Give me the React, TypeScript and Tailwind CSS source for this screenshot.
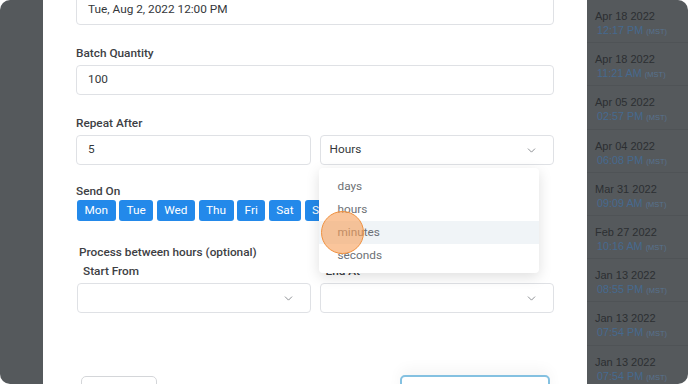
import { ChevronDown } from "lucide-react";

const days = ["Mon", "Tue", "Wed", "Thu", "Fri", "Sat", "Sun"];
const units = ["days", "hours", "minutes", "seconds"];

const rows = [
  { date: "Apr 18 2022", time: "12:17 PM" },
  { date: "Apr 18 2022", time: "11:21 AM" },
  { date: "Apr 05 2022", time: "02:57 PM" },
  { date: "Apr 04 2022", time: "06:08 PM" },
  { date: "Mar 31 2022", time: "09:09 AM" },
  { date: "Feb 27 2022", time: "10:16 AM" },
  { date: "Jan 13 2022", time: "08:55 PM" },
  { date: "Jan 13 2022", time: "07:54 PM" },
  { date: "Jan 13 2022", time: "07:54 PM" },
];

function Label({ children, className = "" }: { children: React.ReactNode; className?: string }) {
  return <div className={`text-[11.8px] leading-[16px] font-medium text-[#3d4044] ${className}`}>{children}</div>;
}

function Input({ value, className = "" }: { value: string; className?: string }) {
  return (
    <div
      className={`flex h-[30px] items-center rounded-[4px] border border-[#dfe1e5] bg-white pl-[11px] text-[11.8px] text-[#34373b] ${className}`}
    >
      {value}
    </div>
  );
}

function Select({ value = "" }: { value?: string }) {
  return (
    <div className="flex h-[30px] w-full items-center justify-between rounded-[4px] border border-[#dfe1e5] bg-white pl-[9px] pr-[15px] text-[11.8px] text-[#34373b]">
      <span>{value}</span>
      <ChevronDown size={13} strokeWidth={1.4} className="text-[#6b6f74]" />
    </div>
  );
}

export default function App() {
  return (
    <div className="h-[384px] w-[688px] bg-white">
      <div className="flex h-full w-full overflow-hidden rounded-[10px] bg-[#55595c]">
        <div className="w-[43px] shrink-0" />

        <div className="relative w-[544px] shrink-0 bg-white px-[33px] [font-family:Roboto,sans-serif]">
          <Input value="Tue, Aug 2, 2022 12:00 PM" className="-mt-[5px]" />

          <Label className="mt-[20px]">Batch Quantity</Label>
          <Input value="100" className="mt-[4px]" />

          <Label className="mt-[20px]">Repeat After</Label>
          <div className="mt-[4px] grid grid-cols-2 gap-[9px]">
            <Input value="5" />
            <div className="relative">
              <Select value="Hours" />
              <div className="absolute -left-px top-[33px] z-10 w-[220px] rounded-[4px] bg-white pb-[6px] pt-[7px] shadow-[0_4px_14px_rgba(0,0,0,0.13)]">
                {units.map((u) => (
                  <div
                    key={u}
                    className={`flex h-[23px] items-center pl-[19px] text-[11.8px] text-[#6d7176] ${
                      u === "minutes" ? "bg-[#f0f4f7]" : ""
                    }`}
                  >
                    {u}
                  </div>
                ))}
                <div className="absolute left-[2px] top-[43px] h-[43px] w-[43px] rounded-full border-[1.5px] border-[#f0913f] bg-[rgba(246,158,88,0.6)]" />
              </div>
            </div>
          </div>

          <Label className="mt-[18px]">Send On</Label>
          <div className="mt-px flex gap-[3.5px] pl-px">
            {days.map((d) => (
              <div
                key={d}
                className="flex h-[21px] items-center rounded-[3px] bg-[#2389ea] px-[7.5px] text-[11.8px] text-white"
              >
                {d}
              </div>
            ))}
          </div>

          <Label className="mt-[23px] pl-[3px]">Process between hours (optional)</Label>
          <div className="mt-[3px] grid grid-cols-2 gap-[9px]">
            <div>
              <Label className="pl-[7px]">Start From</Label>
              <div className="mt-[4px] pl-px">
                <Select />
              </div>
            </div>
            <div>
              <Label className="pl-[6px]">End At</Label>
              <div className="mt-[4px]">
                <Select />
              </div>
            </div>
          </div>

          <div className="mt-[63px] flex items-start justify-between pl-[5px] pr-[4px]">
            <div className="h-[30px] w-[76px] rounded-[5px] border border-[#d4d6d9] bg-white" />
            <div className="-mt-px h-[30px] w-[150px] rounded-[5px] border-2 border-[#84c1e1] bg-white shadow-[0_-6px_14px_rgba(0,0,0,0.04)]" />
          </div>
        </div>

        <div className="flex-1 [font-family:'Liberation_Sans',Arial,sans-serif]">
          {rows.map((r, i) => (
            <div key={i} className="h-[43.2px] border-b border-[#4f5356] pl-[8px] pt-[9px]">
              <div className="text-[11px] leading-[14px] text-[#2c2f32]">{r.date}</div>
              <div className="whitespace-nowrap pl-[2px] text-[10.8px] leading-[14px] text-[#46698f]">
                {r.time} <span className="text-[7.5px] text-[#57728f]">(MST)</span>
              </div>
            </div>
          ))}
        </div>
      </div>
    </div>
  );
}
